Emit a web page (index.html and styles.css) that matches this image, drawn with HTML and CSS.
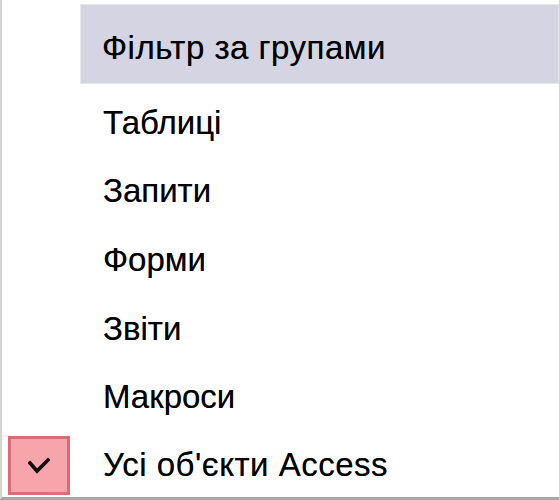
FILE: index.html
```html
<!DOCTYPE html>
<html lang="uk">
<head>
<meta charset="utf-8">
<link rel="stylesheet" href="styles.css">
</head>
<body>
<div class="menu">
  <div class="header"><span class="label wide">Фільтр за групами</span></div>
  <div class="item first"><span class="label">Таблиці</span></div>
  <div class="item"><span class="label">Запити</span></div>
  <div class="item"><span class="label">Форми</span></div>
  <div class="item"><span class="label">Звіти</span></div>
  <div class="item"><span class="label">Макроси</span></div>
  <div class="item checked">
    <span class="check">
      <svg width="22" height="17" viewBox="0 0 22 17"><path d="M2 6 L9 14 L20 3" fill="none" stroke="#111" stroke-width="3.6" stroke-linecap="square" stroke-linejoin="miter"/></svg>
    </span>
    <span class="label wide">Усі об'єкти Access</span>
  </div>
</div>
</body>
</html>
```
FILE: styles.css
```css
html, body {
  margin: 0;
  padding: 0;
  background: #ffffff;
}
body {
  width: 559px;
  height: 500px;
  overflow: hidden;
  font-family: "Liberation Sans", Arial, sans-serif;
  color: #000000;
}
.menu {
  box-sizing: border-box;
  width: 559px;
  height: 500px;
  border-left: 2px solid #d4d4d4;
  border-bottom: 3px solid #a6a6a6;
  padding-top: 4px;
  display: flex;
  flex-direction: column;
}
.label {
  font-size: 33px;
  line-height: 1;
  white-space: nowrap;
  text-shadow: 0 0 0.6px rgba(0, 0, 0, 0.6);
}
.label.wide {
  letter-spacing: 0.5px;
}
.header {
  margin-left: 78px;
  height: 80px;
  box-sizing: border-box;
  background: #d4d4e2;
  border: 1px solid #e6e6ee;
  display: flex;
  align-items: center;
  padding-left: 21px;
  padding-top: 7px;
}
.item {
  height: 69px;
  display: flex;
  align-items: center;
  padding-left: 101px;
  box-sizing: border-box;
}
.item.first {
  margin-top: 4px;
}
.item.checked {
  padding-left: 6px;
  height: 66px;
}
.check {
  width: 62px;
  height: 59px;
  box-sizing: border-box;
  background: #f6a6aa;
  border: 3px solid #d96d73;
  display: flex;
  align-items: center;
  justify-content: center;
  margin-right: 33px;
  margin-top: 3px;
}
.check svg {
  display: block;
}
```
